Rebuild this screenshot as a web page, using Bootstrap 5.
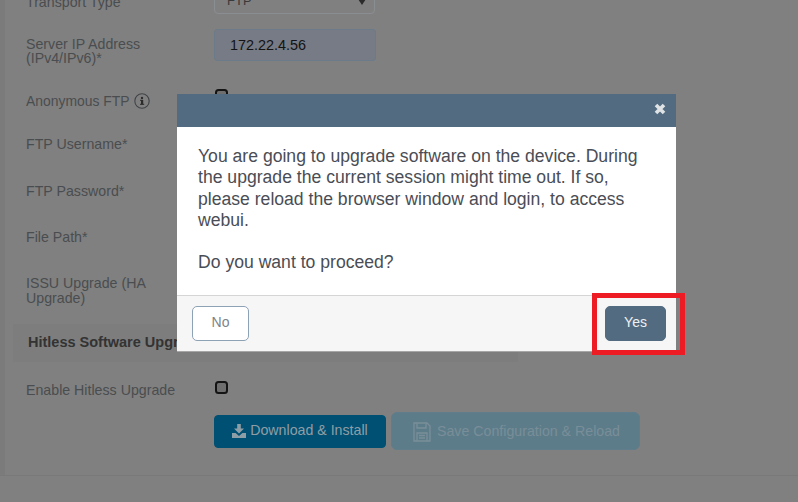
<!doctype html>
<html lang="en"><head><meta charset="utf-8">
<link href="https://cdn.jsdelivr.net/npm/bootstrap@5.3.0/dist/css/bootstrap.min.css" rel="stylesheet">
<style>
html,body{height:100%;overflow:hidden}
body{background:#808080;font-family:"Liberation Sans",Arial,sans-serif;color:#3f4347}
.stage{position:relative;width:798px;height:502px;overflow:hidden}
.shell{margin-top:-5px;height:481px;border-bottom:1px solid #797979}
.page-rail{width:5px;background:#7b7b7b;flex:none}
.form-area{flex:1;padding-left:21px}
.frow{display:flex}
.flabel{width:188px;flex:none;font-size:14.2px;line-height:14.2px;color:#4a4d4f}
.r-transport{height:34px}
.r-server{height:62px}
.r-server .flabel{padding-top:8px}
.r-anon{height:46px}
.r-anon .flabel{padding-top:2px;font-size:13.9px}
.r-user{height:47px}
.r-pass,.r-path{height:46px}
.r-issu{height:48px}
.r-issu .flabel{line-height:14.6px}
.r-enable{height:32px;margin-top:21px}
.selbox{width:161px;height:26px;margin-top:-7px;border:1px solid #8a8d91;border-radius:4px;background:#808080;font-size:13px;padding:0 8px 6px 12px;color:#3a3a3a;display:flex;justify-content:space-between;align-items:flex-end;line-height:12px}
.caret{width:0;height:0;border-left:4px solid transparent;border-right:4px solid transparent;border-top:6px solid #2b2b2b;margin-bottom:2px}
.ipbox{width:162px;height:32px;border:1px solid #6c7b89;border-radius:3px;background:#767b85;color:#141414;font-size:14.4px;padding:0 15px;line-height:30px}
.chk.form-check-input{width:13px;height:13px;border:2px solid #141414;border-radius:3.5px;background-color:#6e6e6e;display:block;margin:-2px 0 0 1px}
.info{display:inline-flex;vertical-align:-3px;margin-left:1px}
.section-band{margin-left:-13px;width:505px;height:38px;background:#7d7d7d;font-weight:700;font-size:14.5px;color:#333;line-height:36px;padding-left:15px}
.btn-dl,.btn-dl:hover{width:172px;height:33px;background:#005073;border:1px solid #005073;color:#8e9ea6;font-size:14.2px;border-radius:4px;padding:0 0 2px;display:flex;align-items:center;justify-content:center;gap:4px}
.btn-save,.btn-save:hover{width:249px;height:38px;background:#5d7c8a;border:1px solid #5f7d8a;color:#798e98;font-size:14.2px;border-radius:6px;padding:2px 0 0 2px;margin-left:5px;margin-top:-3px;display:flex;align-items:center;justify-content:center;gap:6px}
.dlg{position:absolute;left:177px;top:94px;width:499px;height:257px}
.dlg .modal-content{height:100%;border:0;border-radius:0;background:#fff;box-shadow:0 1px 0 #a6a6a6}
.dlg .modal-header{height:33px;flex:none;background:#536b80;border:0;border-radius:0;padding:0 9px 0 0;justify-content:flex-end;align-items:flex-start}
.dlg-close{width:14px;height:14px;display:flex;padding:0;border:0;background:none;margin-top:8px}
.dlg .modal-body{flex:1;padding:19px 30px 0 21px;font-size:17.6px;line-height:21.3px;color:#4a4d55}
.dlg .modal-body p{margin:0}
.dlg .modal-body p+p{margin-top:21px}
.dlg .modal-footer{height:56px;flex:none;background:#f6f6f6;border-top:1px solid #d5d5d5;border-radius:0;justify-content:space-between;align-items:center;padding:0 10px 0 15px}
.dlg .modal-footer>*{margin:0}
.btn-no,.btn-no:hover{width:57px;height:35px;background:#fff;border:1px solid #8da2b5;border-radius:5px;color:#7d8388;font-size:14px;padding:0 0 2px}
.btn-yes,.btn-yes:hover{width:61px;height:35px;background:#536b80;border:1px solid #536b80;border-radius:5px;color:#eef1f3;font-size:14px;padding:0 0 2px}
.redbox{position:absolute;left:592px;top:293px;width:93px;height:62px;border:5px solid #ed1c24;pointer-events:none}
</style></head><body>
<div class="stage">
 <div class="d-flex shell">
  <div class="page-rail"></div>
  <div class="form-area">
   <div class="frow r-transport"><div class="flabel">Transport Type</div><div><div class="selbox"><span>FTP</span><i class="caret"></i></div></div></div>
   <div class="frow r-server"><div class="flabel">Server IP Address<br>(IPv4/IPv6)*</div><div><div class="ipbox">172.22.4.56</div></div></div>
   <div class="frow r-anon"><div class="flabel">Anonymous FTP <span class="info"><svg width="16" height="16" viewBox="0 0 16 16"><circle cx="8" cy="8" r="7.2" fill="none" stroke="#3f4347" stroke-width="1.1"/><rect x="7" y="7" width="2.2" height="4.5" fill="#2c2c2c"/><rect x="6" y="10.8" width="4.2" height="1" fill="#2c2c2c"/><rect x="6" y="6.8" width="3" height="1" fill="#2c2c2c"/><circle cx="8" cy="4.9" r="1.2" fill="#2c2c2c"/></svg></span></div><div><input class="form-check-input chk" type="checkbox" aria-label="Anonymous FTP"></div></div>
   <div class="frow r-user"><div class="flabel">FTP Username*</div></div>
   <div class="frow r-pass"><div class="flabel">FTP Password*</div></div>
   <div class="frow r-path"><div class="flabel">File Path*</div></div>
   <div class="frow r-issu"><div class="flabel">ISSU Upgrade (HA<br>Upgrade)</div></div>
   <div class="section-band">Hitless Software Upgrade</div>
   <div class="frow r-enable"><div class="flabel">Enable Hitless Upgrade</div><div><input class="form-check-input chk" type="checkbox" aria-label="Enable Hitless Upgrade"></div></div>
   <div class="frow"><div class="flabel"></div><div class="d-flex align-items-start">
     <button class="btn btn-dl" type="button"><svg width="14" height="14" viewBox="0 0 14 14"><path fill="#8e9ea6" d="M5.2 0h3.6v4.6H12L7 9.6 2 4.6h3.2z"/><path fill="#8e9ea6" d="M0 9h3.6L7 12l3.4-3H14v5H0z"/></svg>Download &amp; Install</button>
     <button class="btn btn-save" type="button"><svg width="18" height="20" viewBox="0 0 18 20"><path fill="none" stroke="#798e98" stroke-width="1.3" d="M1 1h13l3 3v15H1zM4 1v5h9V1M4 19v-8h10v8M6 13.5h6M6 16h6"/></svg>Save Configuration &amp; Reload</button>
   </div></div>
  </div>
 </div>
 <div class="dlg">
  <div class="modal-content">
   <div class="modal-header"><button class="dlg-close" type="button" aria-label="Close"><svg width="14" height="14" viewBox="0 0 14 14"><path d="M3 3l8 8M11 3l-8 8" stroke="#dfe3e6" stroke-width="3.6"/></svg></button></div>
   <div class="modal-body"><p>You are going to upgrade software on the device. During the upgrade the current session might time out. If so, please reload the browser window and login, to access webui.</p><p>Do you want to proceed?</p></div>
   <div class="modal-footer"><button class="btn btn-no" type="button">No</button><button class="btn btn-yes" type="button">Yes</button></div>
  </div>
 </div>
 <div class="redbox"></div>
</div>
<script src="https://cdn.jsdelivr.net/npm/bootstrap@5.3.0/dist/js/bootstrap.bundle.min.js"></script>
</body></html>
